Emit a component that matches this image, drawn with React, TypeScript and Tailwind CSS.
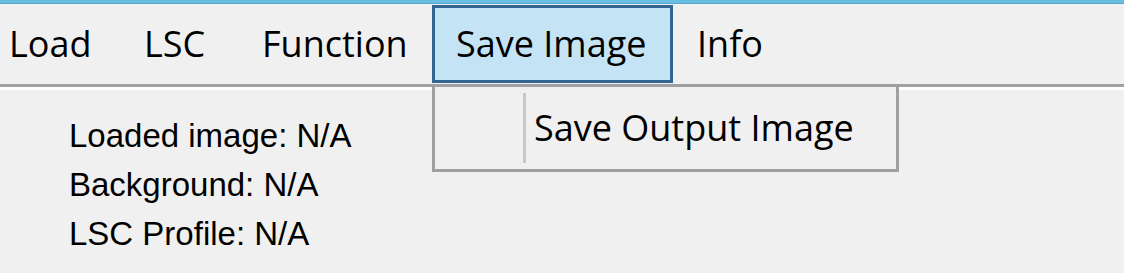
import React from "react";

const menuItems = [
    { label: "Load", w: "w-[135px]" },
    { label: "LSC", w: "w-[118px]" },
    { label: "Function", w: "w-[194px]" },
    { label: "Save Image", w: "w-[241px]", open: true },
    { label: "Info", w: "w-[110px]" },
];

export default function App() {
    return (
        <div className="w-[1124px] h-[273px] overflow-hidden bg-[#f0f0f0] text-black">
            {/* window frame strip */}
            <div className="h-[3px] bg-[#66bfe2]" />
            <div className="h-[1px] bg-[#5aa6c8]" />

            {/* menu bar */}
            <div className="h-[80px] bg-[#f0f0f0] flex items-stretch -ml-[15px] font-['Open_Sans',sans-serif] text-[36px]">
                {menuItems.map((item) =>
                    item.open ? (
                        <div
                            key={item.label}
                            className={`${item.w} flex items-center pl-[21px] bg-[#c4e3f5] border-[3px] border-[#2f6590] mt-[1px] mb-[1px]`}
                        >
                            {item.label}
                        </div>
                    ) : (
                        <div key={item.label} className={`${item.w} flex items-center pl-[24px]`}>
                            {item.label}
                        </div>
                    )
                )}
            </div>
            <div className="h-[3px] bg-[#a0a0a0]" />
            <div className="h-[3px] bg-white" />

            {/* content */}
            <div className="relative">
                <div className="pl-[69px] pt-[21px] flex flex-col font-['Liberation_Sans',Arial,sans-serif] text-[33px] leading-[49px]">
                    <span>Loaded image: N/A</span>
                    <span>Background: N/A</span>
                    <span>LSC Profile: N/A</span>
                </div>

                {/* open dropdown */}
                <div className="absolute left-[432px] -top-[3px] w-[467px] h-[85px] bg-[#f0f0f0] border-[3px] border-t-0 border-[#a0a0a0] flex items-stretch">
                    <div className="w-[91px] flex justify-end pt-[6px] pb-[6px]">
                        <div className="w-[3px] bg-[#c8c8c8]" />
                    </div>
                    <div className="flex items-center pl-[8px] font-['Open_Sans',sans-serif] text-[36px]">
                        Save Output Image
                    </div>
                </div>
            </div>
        </div>
    );
}
